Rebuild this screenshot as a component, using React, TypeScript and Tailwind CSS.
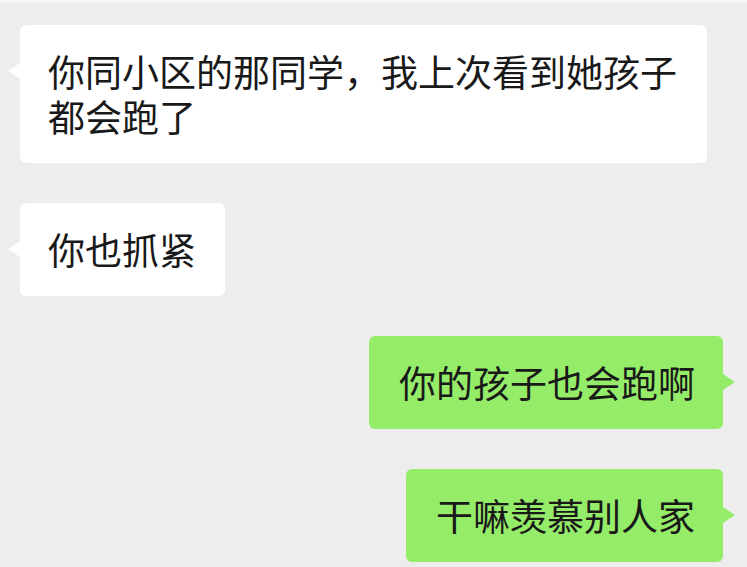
type Msg = { text: string; mine: boolean };

const messages: Msg[] = [
  { text: "你同小区的那同学，我上次看到她孩子都会跑了", mine: false },
  { text: "你也抓紧", mine: false },
  { text: "你的孩子也会跑啊", mine: true },
  { text: "干嘛羡慕别人家", mine: true },
];

const Bubble = ({ msg }: { msg: Msg }) => {
  if (msg.mine) {
    return (
      <div className="flex justify-end">
        <div className="relative max-w-[687px] rounded-md bg-[#95ec69] pl-[30px] pr-[28px] py-6 text-[37px] leading-[45px] text-[#191919]">
          {msg.text}
          <span className="absolute -right-[12px] top-[38px] h-0 w-0 border-y-8 border-l-[12px] border-y-transparent border-l-[#95ec69]" />
        </div>
      </div>
    );
  }
  return (
    <div className="flex justify-start">
      <div className="relative max-w-[687px] rounded-md bg-white pl-[28px] pr-[29px] py-6 text-[37px] leading-[45px] text-[#191919]">
        {msg.text}
        <span className="absolute -left-[12px] top-[38px] h-0 w-0 border-y-8 border-r-[12px] border-y-transparent border-r-white" />
      </div>
    </div>
  );
};

export default function App() {
  return (
    <div
      className="min-h-[567px] w-[747px] overflow-hidden bg-[#ededed]"
      style={{ fontFamily: '"Noto Sans CJK SC", "Noto Sans", sans-serif' }}
    >
      <div className="h-[3px] bg-[#f6f6f6]" />
      <div className="flex flex-col gap-10 pl-5 pr-6 pt-[22px]">
        {messages.map((m, i) => (
          <Bubble key={i} msg={m} />
        ))}
      </div>
    </div>
  );
}
